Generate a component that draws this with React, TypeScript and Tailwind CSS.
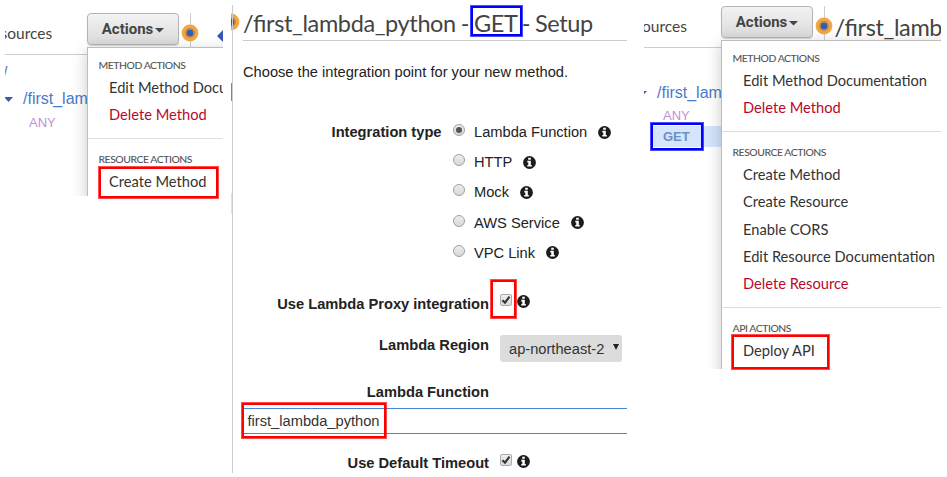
import type { ReactNode } from "react";

const LATO = "font-[Lato,sans-serif]";
const SANS = "font-['Liberation_Sans',Arial,sans-serif]";
const TITLE = "text-[23.5px] tracking-[-0.38px] [word-spacing:-0.7px] [font-feature-settings:'liga'_1]";

type Item = { label: string; danger?: boolean };
type Group = { title: string; items: Item[] };

function InfoIcon() {
  return (
    <svg viewBox="0 0 13 13" className="size-[13px] shrink-0">
      <circle cx="6.5" cy="6.5" r="6.4" fill="#1c1c1c" />
      <path d="M5.2 1.7h2.6v2H5.2zM4.3 4.8h3.5v4.1h1v1.7H4.3V8.9h1V6.4h-1z" fill="#fff" />
    </svg>
  );
}

function Handle({ className }: { className: string }) {
  return (
    <svg viewBox="0 0 18 18" className={`absolute size-[18px] ${className}`}>
      <circle cx="9" cy="9" r="8.4" fill="#f2a83f" />
      <circle cx="9" cy="9" r="5" fill="#b98a52" />
      <circle cx="9" cy="9" r="3.2" fill="#345cb4" />
    </svg>
  );
}

function ActionsButton() {
  return (
    <div className="flex h-8 w-[92px] shrink-0 items-center justify-center gap-[2px] rounded-[4px] border border-[#b4b4b4] bg-linear-to-b from-[#f3f3f3] to-[#dadada] shadow-[0_1px_1px_rgba(0,0,0,0.15)]">
      <span className="font-[Roboto,sans-serif] text-[15px] leading-5 font-bold text-[#444]">Actions</span>
      <svg viewBox="0 0 9 5" className="mt-0.5 h-[5px] w-[9px]">
        <path d="M0 0h9L4.5 4.6z" fill="#444" />
      </svg>
    </div>
  );
}

function Menu({ groups, className }: { groups: Group[]; className: string }) {
  return (
    <div className={`absolute border-t border-l border-[#bdbdbd] bg-white pt-[7px] shadow-[0_4px_14px_rgba(0,0,0,0.22)] ${LATO} ${className}`}>
      {groups.map((group, i) => (
        <div key={group.title} className={i > 0 ? "mt-[9px] border-t border-[#dedede] pt-[9.8px]" : ""}>
          <div className="pl-[10.5px] text-[10.4px] leading-5 font-medium tracking-[-0.45px] whitespace-nowrap text-[#555]">
            {group.title}
          </div>
          {group.items.map((item) => (
            <div
              key={item.label}
              className={`h-[27.2px] pl-[21px] text-[14.67px] leading-[26px] whitespace-nowrap ${item.danger ? "text-[#b9082c]" : "text-[#333]"}`}
            >
              {item.label}
            </div>
          ))}
        </div>
      ))}
    </div>
  );
}

const methodActions: Group = {
  title: "METHOD ACTIONS",
  items: [{ label: "Edit Method Documentation" }, { label: "Delete Method", danger: true }],
};

function ResourcesBefore() {
  return (
    <section className="relative mt-[13px] h-[183px] w-[218px] shrink-0 overflow-hidden">
      <div className="flex h-[42px] w-[83px] items-center border-b border-[#ccc]">
        <span className={`-ml-[4.5px] text-[15.5px] text-[#444] ${LATO}`}>sources</span>
      </div>
      <div className={`text-[16px] leading-[26px] text-[#4a7bcb] ${SANS}`}>
        <div className="-ml-[2px] mt-[5px] h-[26px]">/</div>
        <div className="flex h-[26px] items-center">
          <svg viewBox="0 0 9 5" className="-ml-[1px] h-[5px] w-[9px]">
            <path d="M0 0h9L4.5 5z" fill="#345cb4" />
          </svg>
          <span className="ml-[10px]">/first_lambda</span>
        </div>
        <div className="ml-6 text-[13px] leading-[21px] text-[#c48fd6]">ANY</div>
      </div>
      <div className="absolute top-0 left-[185px] h-[34px] w-px bg-[#ccc]" />
      <Handle className="top-[11px] left-[176px]" />
      <svg viewBox="0 0 6 12" className="absolute top-[17px] left-[212px] h-3 w-1.5">
        <path d="M6 0v12L0 6z" fill="#3a57b7" />
      </svg>
      <div className="absolute top-0 left-[82px]">
        <ActionsButton />
      </div>
      <Menu
        className="top-[34px] left-[82px] h-[220px] w-[280px]"
        groups={[methodActions, { title: "RESOURCE ACTIONS", items: [{ label: "Create Method" }] }]}
      />
    </section>
  );
}

function ResourcesAfter() {
  return (
    <section className="relative mt-[6px] h-[363px] w-[297px] shrink-0 overflow-hidden">
      <div className="flex h-[42px] w-[78px] items-center border-b border-[#ccc]">
        <span className={`-ml-[2px] text-[15.5px] text-[#444] ${LATO}`}>ources</span>
      </div>
      <div className={`text-[16px] leading-[26px] text-[#4a7bcb] ${SANS}`}>
        <div className="mt-[32px] flex h-[26px] items-center">
          <svg viewBox="0 0 9 5" className="-ml-[6px] h-[5px] w-[9px]">
            <path d="M0 0h9L4.5 5z" fill="#345cb4" />
          </svg>
          <span className="ml-[10px]">/first_lambda</span>
        </div>
        <div className="-mt-px ml-[19px] text-[13px] leading-[21px] text-[#c48fd6]">ANY</div>
        <div className="ml-[8px] h-[21px] bg-[#d4e5fc] pl-[11px] text-[13px] leading-[21px] font-bold text-[#6b91c4]">GET</div>
      </div>
      <div className="absolute top-0 left-[180px] h-[34px] w-px bg-[#ccc]" />
      <Handle className="top-[11px] left-[171px]" />
      <div className={`absolute top-[4px] left-[190.5px] leading-[34px] whitespace-nowrap text-[#444] ${TITLE} ${LATO}`}>
        /first_lambda_python
      </div>
      <div className="absolute top-0 left-[77px]">
        <ActionsButton />
      </div>
      <Menu
        className="top-[34px] left-[77px] h-[400px] w-[280px]"
        groups={[
          methodActions,
          {
            title: "RESOURCE ACTIONS",
            items: [
              { label: "Create Method" },
              { label: "Create Resource" },
              { label: "Enable CORS" },
              { label: "Edit Resource Documentation" },
              { label: "Delete Resource", danger: true },
            ],
          },
          { title: "API ACTIONS", items: [{ label: "Deploy API" }] },
        ]}
      />
    </section>
  );
}

function Radio({ checked }: { checked?: boolean }) {
  return (
    <span className="-mt-1 flex size-3 shrink-0 items-center justify-center rounded-full border border-[#a0a0a0] bg-linear-to-b from-[#eee] to-[#d8d8d8]">
      {checked && <span className="size-1.5 rounded-full bg-[#555]" />}
    </span>
  );
}

function Checkbox() {
  return (
    <span className="-mt-[3px] flex size-3 shrink-0 items-center justify-center rounded-[2px] border border-[#ababab] bg-linear-to-b from-[#eee] to-[#dcdcdc]">
      <svg viewBox="0 0 10 10" className="size-[10px] shrink-0">
        <path d="M1.4 5.2 4 7.6 8.5 1.6" fill="none" stroke="#333" strokeWidth="2.1" />
      </svg>
    </span>
  );
}

function Label({ children }: { children: ReactNode }) {
  return <div className="w-[246px] shrink-0 text-right font-bold text-[#222]">{children}</div>;
}

const integrations = ["Lambda Function", "HTTP", "Mock", "AWS Service", "VPC Link"];

function Setup() {
  return (
    <section className={`relative mt-[5px] ml-[8px] h-[468px] w-[396px] shrink-0 overflow-hidden pl-[12px] text-[14.67px] text-[#222] ${SANS}`}>
      <div className="absolute top-[78px] left-0 h-[18px] w-px bg-[#9a8467]" />
      <div className="absolute top-[188px] left-0 h-[21px] w-px bg-[#d4e5fc]" />
      <Handle className="top-[8px] -left-[9px]" />
      <div className="absolute top-0 left-px h-full w-px bg-[#ccc]" />
      <h1 className={`h-9 border-b border-[#ccc] leading-[37px] whitespace-nowrap text-[#444] ${TITLE} ${LATO}`}>
        /first_lambda_python - GET - Setup
      </h1>
      <p className="mt-[20px] leading-[22px]">Choose the integration point for your new method.</p>
      <div className="mt-[34px] flex leading-[30px]">
        <div className="w-[198.5px] shrink-0 text-right font-bold">Integration type</div>
        <div className="ml-[11.5px]">
          {integrations.map((name, i) => (
            <div key={name} className="flex h-[30.2px] items-center">
              <Radio checked={i === 0} />
              <span className="ml-[9px]">{name}</span>
              <span className="ml-[11px]">
                <InfoIcon />
              </span>
            </div>
          ))}
        </div>
      </div>
      <div className="mt-[21px] flex h-[30px] items-center">
        <Label>
          <div className="pt-px">Use Lambda Proxy integration</div>
        </Label>
        <span className="-mt-[4px] ml-[11px] flex items-center gap-[5px]">
          <Checkbox />
          <InfoIcon />
        </span>
      </div>
      <div className="mt-[16px] flex h-[27px] items-start">
        <Label>
          <div className="leading-[20px]">Lambda Region</div>
        </Label>
        <div className="ml-[11px] flex h-[27px] w-[122px] items-center justify-between rounded-[3px] bg-[#dcdcdc] pt-px pr-[3px] pl-[9px] text-[#333]">
          ap-northeast-2
          <svg viewBox="0 0 6 6" className="-mt-1 size-1.5">
            <path d="M0 0h6L3 6z" fill="#222" />
          </svg>
        </div>
      </div>
      <div className="mt-[19px] h-[27px] leading-[22px]">
        <Label>Lambda Function</Label>
      </div>
      <div className="h-[26px] border-y border-[#4a86d8] pl-[4.5px] leading-[24px] text-[#333]">first_lambda_python</div>
      <div className="mt-[13.5px] flex h-[30px] items-center">
        <Label>
          <div className="pt-px">Use Default Timeout</div>
        </Label>
        <span className="-mt-[2px] ml-[11px] flex items-center gap-[5px]">
          <Checkbox />
          <InfoIcon />
        </span>
      </div>
    </section>
  );
}

function Highlight({ className, blue }: { className: string; blue?: boolean }) {
  const tone = blue
    ? "border-[#0000ff] shadow-[0_0_0_1px_rgba(0,0,255,0.7)]"
    : "border-[#ff0000] shadow-[0_0_0_1px_rgba(255,0,0,0.7)]";
  return <div className={`absolute border-2 ${tone} ${className}`} />;
}

export default function App() {
  return (
    <main className="relative flex h-[477px] w-[947px] items-start overflow-hidden bg-white pl-[5px]">
      <ResourcesBefore />
      <Setup />
      <div className="w-[17px] shrink-0" />
      <ResourcesAfter />
      <Highlight className="top-[167px] left-[99px] h-[31px] w-[119px]" />
      <Highlight blue className="top-[6px] left-[471px] h-[30px] w-[51px]" />
      <Highlight className="top-[280px] left-[491px] h-[38px] w-[25px]" />
      <Highlight className="top-[403px] left-[242px] h-[35px] w-[144px]" />
      <Highlight blue className="top-[123px] left-[651px] h-[27px] w-[52px]" />
      <Highlight className="top-[335px] left-[732px] h-[34px] w-[97px]" />
    </main>
  );
}
